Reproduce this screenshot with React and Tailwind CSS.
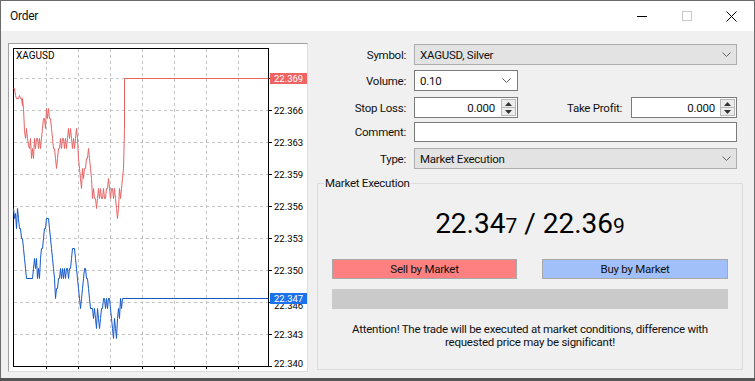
const red = [[13,88],[14,88],[15,95],[16,98],[18,98],[19,95],[20,98],[21,98],[22,105],[22,98],[23,108],[24,130],[25,138],[26,128],[27,138],[28,145],[29,148],[30,138],[31,158],[32,148],[33,158],[34,138],[35,148],[36,138],[37,138],[38,148],[39,138],[40,148],[41,138],[42,128],[43,118],[44,118],[45,128],[46,108],[47,118],[48,108],[49,118],[50,118],[51,128],[52,138],[53,148],[54,148],[55,158],[56,168],[57,158],[58,148],[59,148],[60,138],[61,148],[62,138],[63,138],[64,148],[65,138],[66,148],[67,138],[68,128],[69,138],[70,128],[71,138],[72,148],[73,138],[74,148],[75,138],[76,128],[77,138],[78,158],[79,168],[80,178],[81,188],[82,168],[83,178],[84,168],[85,168],[86,158],[87,158],[88,148],[89,158],[90,168],[91,178],[92,198],[93,188],[94,198],[95,198],[96,208],[97,198],[98,188],[99,198],[100,188],[101,198],[102,198],[103,188],[104,198],[105,198],[106,188],[107,188],[108,178],[109,188],[110,198],[111,188],[112,188],[113,198],[114,188],[115,198],[116,208],[117,218],[118,208],[119,188],[120,198],[121,188],[122,178],[123,168],[124,128],[124,78],[268,78]];

const blue = [[13,208],[14,218],[15,213],[16,228],[17,208],[18,218],[19,228],[20,228],[21,238],[22,238],[23,248],[24,258],[25,268],[26,278],[32,278],[33,268],[34,258],[35,268],[36,258],[37,278],[38,268],[39,278],[40,258],[41,248],[42,248],[43,238],[44,228],[45,228],[46,218],[48,218],[49,228],[50,238],[51,248],[52,258],[53,268],[54,278],[55,298],[56,288],[57,288],[58,278],[59,278],[60,268],[61,278],[62,268],[63,278],[64,268],[65,278],[66,268],[67,268],[68,278],[69,268],[70,268],[71,258],[72,248],[74,248],[75,258],[76,268],[77,278],[78,288],[79,298],[80,308],[81,298],[82,288],[83,278],[84,268],[85,268],[86,278],[87,278],[88,288],[89,298],[90,308],[92,308],[93,318],[94,308],[95,318],[96,328],[97,308],[98,318],[99,328],[100,318],[101,308],[102,308],[103,298],[104,298],[105,308],[106,298],[107,308],[108,298],[109,298],[110,308],[111,318],[112,328],[113,338],[114,318],[115,328],[116,338],[117,318],[118,308],[119,318],[120,298],[121,308],[122,298],[268,298]];

const pts = (a) => a.map(([x, y]) => `${x + 0.5},${y + 0.5}`).join(" ");

const levels = [
  [110, "22.366"],
  [142, "22.363"],
  [174, "22.359"],
  [206, "22.356"],
  [238, "22.353"],
  [270, "22.350"],
  [334, "22.343"],
];
const vgrid = [46, 78, 110, 142, 174, 206, 238];

function Chart() {
  return (
    <svg width="298" height="327" viewBox="9 44 298 327" className="block">
      <defs>
        <clipPath id="below">
          <rect x="270" y="304" width="37" height="10" />
        </clipPath>
      </defs>
      <rect x="9" y="44" width="298" height="327" fill="#ffffff" />
      {[78, 302, ...levels.map((l) => l[0])].map((y) => (
        <line key={"h" + y} x1="14" x2="268" y1={y + 0.5} y2={y + 0.5} stroke="#c4c4c4" strokeDasharray="3 3" />
      ))}
      {vgrid.map((x) => (
        <line key={"v" + x} x1={x + 0.5} x2={x + 0.5} y1="49" y2="366" stroke="#c4c4c4" strokeDasharray="3 3" />
      ))}
      {vgrid.map((x) => (
        <line key={"bt" + x} x1={x + 0.5} x2={x + 0.5} y1="367" y2="369" stroke="#000" />
      ))}
      {[78, 302, ...levels.map((l) => l[0]), 366].map((y) => (
        <line key={"t" + y} x1="269" x2="272" y1={y + 0.5} y2={y + 0.5} stroke="#000" />
      ))}
      <rect x="13.5" y="48.5" width="255" height="318" fill="none" stroke="#000" />
      <text x="16" y="58.5" fontSize="10" fill="#000">XAGUSD</text>
      {levels.map(([y, t]) => (
        <text key={t} x="274" y={y + 4} fontSize="9.5" fill="#000">{t}</text>
      ))}
      <text x="274" y="367" fontSize="9.5" fill="#000">22.340</text>
      <g clipPath="url(#below)">
        <text x="274" y="309" fontSize="9.5" fill="#000">22.346</text>
      </g>
      <polyline points={pts(red)} fill="none" stroke="#e66464" strokeWidth="1" />
      <polyline points={pts(blue)} fill="none" stroke="#1458c8" strokeWidth="1" />
      <rect x="270" y="73" width="37" height="11" fill="#f06363" />
      <text x="274" y="82" fontSize="9.5" fill="#fff">22.369</text>
      <rect x="270" y="293" width="37" height="11" fill="#1c72ea" />
      <text x="274" y="302" fontSize="9.5" fill="#fff">22.347</text>
    </svg>
  );
}

function Chevron() {
  return (
    <svg width="9" height="5" viewBox="0 0 9 5" className="shrink-0">
      <polyline points="0.5,0.5 4.5,4.5 8.5,0.5" fill="none" stroke="#606060" strokeWidth="1" />
    </svg>
  );
}

function Spinner() {
  return (
    <div className="w-[15px] h-[17px] flex flex-col border border-[#b9b9b9] bg-[#ececec] mr-[1px]">
      <div className="flex-1 flex items-center justify-center border-b border-[#b9b9b9]">
        <svg width="7" height="4" viewBox="0 0 7 4"><polygon points="3.5,0 7,4 0,4" fill="#333" /></svg>
      </div>
      <div className="flex-1 flex items-center justify-center">
        <svg width="7" height="4" viewBox="0 0 7 4"><polygon points="0,0 7,0 3.5,4" fill="#333" /></svg>
      </div>
    </div>
  );
}

function Label({ children }) {
  return <div className="w-[90px] shrink-0 text-right pr-[1px]">{children}</div>;
}

export default function App() {
  return (
    <div className="w-[755px] h-[381px] bg-[#555555] overflow-hidden font-['Segoe_UI',Roboto,sans-serif] text-[11.5px] tracking-[-0.25px] leading-[14px] text-[#111]">
      <div className="w-[755px] h-[378px] border-x border-t border-[#6b6b6b] bg-[#f0f0f0] flex flex-col">
        {/* title bar */}
        <div className="h-[30px] bg-white flex items-center shrink-0">
          <div className="pl-[9px] text-[12px] flex-1">Order</div>
          <div className="flex h-full">
            <div className="w-[45px] flex items-center justify-center">
              <div className="w-[10px] h-px bg-black" />
            </div>
            <div className="w-[45px] flex items-center justify-center">
              <div className="w-[10px] h-[10px] border border-[#c8c8c8]" />
            </div>
            <div className="w-[45px] flex items-center justify-center">
              <svg width="11" height="11" viewBox="0 0 11 11">
                <line x1="0.5" y1="0.5" x2="10.5" y2="10.5" stroke="#000" />
                <line x1="10.5" y1="0.5" x2="0.5" y2="10.5" stroke="#000" />
              </svg>
            </div>
          </div>
        </div>

        {/* body */}
        <div className="flex pt-[12px] pl-[7px]">
          <div className="w-[300px] h-[329px] border border-t-[#a0a0a0] border-l-[#a0a0a0] border-r-[#dedede] border-b-[#dedede] shrink-0 tracking-normal">
            <Chart />
          </div>

          <div className="ml-[9px] w-[426px] flex flex-col">
            {/* Symbol */}
            <div className="mt-[1px] flex items-center gap-[7px] h-[21px]">
              <Label>Symbol:</Label>
              <div className="w-[323px] h-[21px] border border-[#adadad] bg-[#e3e3e3] flex items-center pl-[5px] pr-[5px]">
                <div className="flex-1">XAGUSD, Silver</div>
                <Chevron />
              </div>
            </div>
            {/* Volume */}
            <div className="mt-[5px] flex items-center gap-[7px] h-[21px]">
              <Label>Volume:</Label>
              <div className="w-[104px] h-[21px] border border-[#7a7a7a] bg-white flex items-center pl-[5px] pr-[6px]">
                <div className="flex-1">0.10</div>
                <Chevron />
              </div>
            </div>
            {/* Stop loss / Take profit */}
            <div className="mt-[6px] flex items-center h-[21px]">
              <Label>Stop Loss:</Label>
              <div className="ml-[7px] w-[104px] h-[21px] border border-[#7a7a7a] bg-white flex items-center">
                <div className="flex-1 text-right pr-[6px]">0.000</div>
                <Spinner />
              </div>
              <div className="w-[104px] text-right">Take Profit:</div>
              <div className="ml-[9px] w-[106px] h-[21px] border border-[#7a7a7a] bg-white flex items-center">
                <div className="flex-1 text-right pr-[5px]">0.000</div>
                <Spinner />
              </div>
            </div>
            {/* Comment */}
            <div className="mt-[4px] flex items-center gap-[7px] h-[20px]">
              <Label>Comment:</Label>
              <div className="w-[323px] h-[20px] border border-[#7a7a7a] bg-white" />
            </div>
            {/* Type */}
            <div className="mt-[6px] flex items-center gap-[7px] h-[21px]">
              <Label>Type:</Label>
              <div className="w-[323px] h-[21px] border border-[#adadad] bg-[#e3e3e3] flex items-center pl-[5px] pr-[5px]">
                <div className="flex-1">Market Execution</div>
                <Chevron />
              </div>
            </div>

            {/* group box */}
            <div className="mt-[14px] relative w-[426px] h-[187px] border border-[#dcdcdc] flex flex-col items-center">
              <div className="absolute left-[6px] top-[-8px] px-px bg-[#f0f0f0]">Market Execution</div>
              <div className="mt-[26px] h-[32px] flex items-baseline justify-center leading-none tracking-normal text-black">
                <span className="text-[28px]">22.34</span>
                <span className="text-[21px]">7</span>
                <span className="text-[28px]">&nbsp;/&nbsp;22.36</span>
                <span className="text-[21px]">9</span>
              </div>
              <div className="mt-[17px] w-[396px] flex justify-between">
                <div className="w-[185px] h-[20px] border border-[#a8a8a8] bg-[#ff8080] flex items-center justify-center">Sell by Market</div>
                <div className="w-[186px] h-[20px] border border-[#a8a8a8] bg-[#a1c0fa] flex items-center justify-center">Buy by Market</div>
              </div>
              <div className="mt-[10px] w-[396px] h-[20px] bg-[#cacaca]" />
              <div className="mt-[14px] text-center leading-[13px]">
                Attention! The trade will be executed at market conditions, difference with
                <br />
                requested price may be significant!
              </div>
            </div>
          </div>
        </div>
      </div>
    </div>
  );
}
